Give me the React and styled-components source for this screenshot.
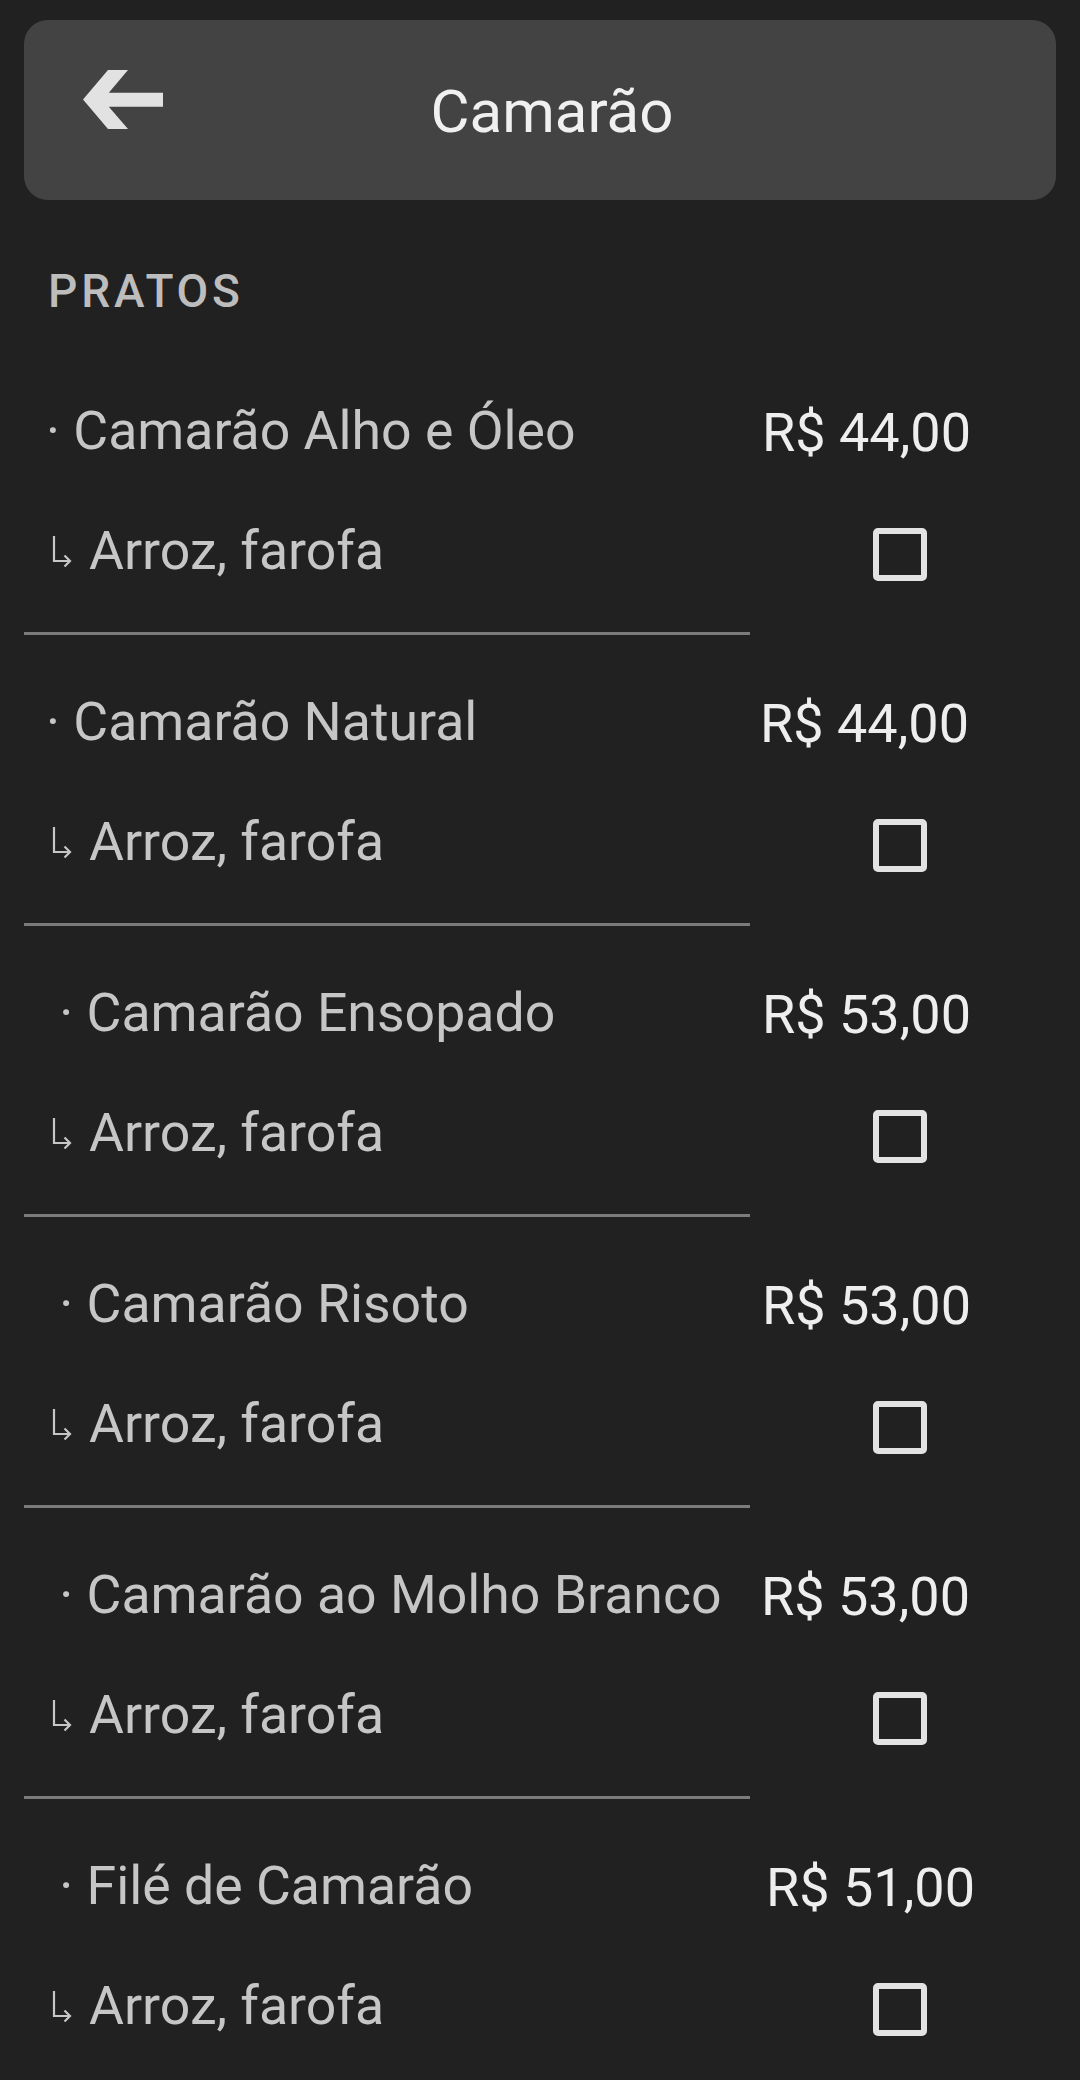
import styled, { createGlobalStyle } from "styled-components";

const GlobalStyle = createGlobalStyle`
  html, body {
    margin: 0;
    padding: 0;
    background: #212121;
  }
  body {
    font-family: Roboto, "Noto Sans", "Liberation Sans", sans-serif;
    -webkit-font-smoothing: antialiased;
  }
`;

const Page = styled.div`
  min-height: 2080px;
  padding: 20px 24px 0;
  box-sizing: border-box;
  background: #212121;
`;

const Header = styled.header`
  display: grid;
  grid-template-columns: 1fr;
  align-items: start;
  height: 180px;
  background: #434343;
  border-radius: 24px;
`;

const BackButton = styled.button`
  grid-area: 1 / 1;
  justify-self: start;
  display: flex;
  margin: 50px 0 0 59px;
  padding: 0;
  border: 0;
  background: none;
  color: #e2e2e2;
  cursor: pointer;
`;

const Title = styled.h1`
  grid-area: 1 / 1;
  justify-self: center;
  margin: 56px 0 0;
  padding-left: 24px;
  font-size: 60px;
  line-height: 72px;
  font-weight: 400;
  color: #f0f0f0;
`;

const SectionLabel = styled.h2`
  margin: 64px 0 0 24px;
  font-size: 46px;
  line-height: 54px;
  font-weight: 500;
  letter-spacing: 3.8px;
  color: #bdbdbd;
`;

const List = styled.div`
  display: flex;
  flex-direction: column;
  margin-top: 26px;
`;

const Item = styled.div`
  display: grid;
  grid-template-columns: 726px 1fr;
  grid-template-rows: 120px 120px auto;
  padding-top: 26px;
`;

const Name = styled.div`
  display: flex;
  align-items: center;
  padding-left: 22px;
  white-space: pre;
  font-size: 53.6px;
  color: #c6c6c6;
`;

const Price = styled.div`
  display: flex;
  align-items: center;
  padding: 5px 0 0 ${(p) => 10 + (p.$nudge || 0)}px;
  font-size: 54px;
  color: #eeeeee;
`;

const Sides = styled.div`
  display: flex;
  align-items: center;
  padding-left: 28px;
  font-size: 53.6px;
  color: #c6c6c6;
`;

const HookIcon = styled.svg`
  flex: none;
  margin: 4px 17px 0 0;
  color: #c6c6c6;
`;

const CheckCell = styled.label`
  display: flex;
  align-items: center;
  padding: 8px 0 0 123px;
`;

const CheckBox = styled.span`
  display: block;
  width: 54px;
  height: 53px;
  box-sizing: border-box;
  border: 6px solid #e3e3e3;
  border-radius: 5px;
`;

const Divider = styled.div`
  grid-column: 1;
  height: 3px;
  margin-top: 22px;
  background: #7b7b7b;
`;

const ArrowBack = () => (
  <svg width="80" height="59" viewBox="0 0 80 59" fill="currentColor">
    <path d="M0 29.5 L25 0 L45 0 L25.8 22.7 L80 22.7 L80 36.7 L25.8 36.7 L45 59 L25 59 Z" />
  </svg>
);

const Hook = () => (
  <HookIcon width="20" height="34" viewBox="0 0 20 34" fill="none" stroke="currentColor" strokeWidth="2.2">
    <path d="M2 1 V26 H17.5" />
    <path d="M12.5 20.5 L18 26 L12.5 31.5" />
  </HookIcon>
);

const pratos = [
  { name: "· Camarão Alho e Óleo", price: "R$ 44,00", nudge: 2 },
  { name: "· Camarão Natural", price: "R$ 44,00", nudge: 0 },
  { name: " · Camarão Ensopado", price: "R$ 53,00", nudge: 2 },
  { name: " · Camarão Risoto", price: "R$ 53,00", nudge: 2 },
  { name: " · Camarão ao Molho Branco", price: "R$ 53,00", nudge: 1 },
  { name: " · Filé de Camarão", price: "R$ 51,00", nudge: 6 },
];

const App = () => {
  const items = pratos.map((obj, index) => (
    <Item key={index}>
      <Name>{obj.name}</Name>
      <Price $nudge={obj.nudge}>{obj.price}</Price>
      <Sides>
        <Hook />
        Arroz, farofa
      </Sides>
      <CheckCell>
        <CheckBox />
      </CheckCell>
      <Divider />
    </Item>
  ));

  return (
    <>
      <GlobalStyle />
      <Page>
        <Header>
          <BackButton aria-label="Voltar">
            <ArrowBack />
          </BackButton>
          <Title>Camarão</Title>
        </Header>
        <SectionLabel>PRATOS</SectionLabel>
        <List>{items}</List>
      </Page>
    </>
  );
};

export default App;
